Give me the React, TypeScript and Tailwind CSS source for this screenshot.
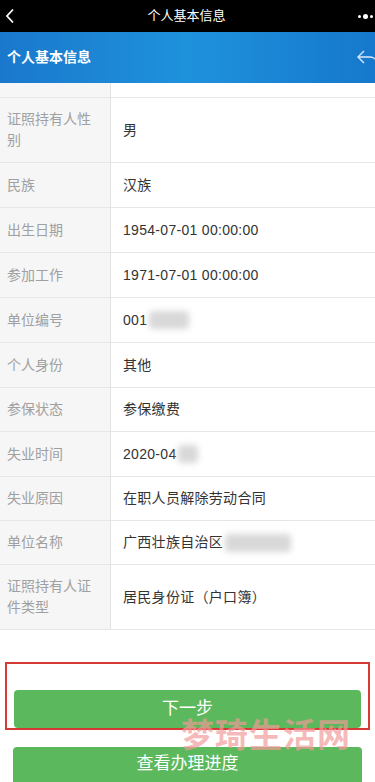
import React from 'react';

type Row = { label: string; value: React.ReactNode; h: string };

const Blur = ({ w }: { w: string }) => (
  <span className={`inline-block h-[18px] ${w} bg-[#d8d8d8] blur-[3px] rounded-sm align-middle ml-[2px]`} />
);

const rows: Row[] = [
  { label: '证照持有人性别', value: '男', h: 'h-[65px]' },
  { label: '民族', value: '汉族', h: 'h-[45px]' },
  { label: '出生日期', value: '1954-07-01 00:00:00', h: 'h-[45px]' },
  { label: '参加工作', value: '1971-07-01 00:00:00', h: 'h-[45px]' },
  { label: '单位编号', value: <>001<Blur w="w-[40px]" /></>, h: 'h-[45px]' },
  { label: '个人身份', value: '其他', h: 'h-[45px]' },
  { label: '参保状态', value: '参保缴费', h: 'h-[44px]' },
  { label: '失业时间', value: <>2020-04<Blur w="w-[20px]" /></>, h: 'h-[45px]' },
  { label: '失业原因', value: '在职人员解除劳动合同', h: 'h-[44px]' },
  { label: '单位名称', value: <>广西壮族自治区<Blur w="w-[66px]" /></>, h: 'h-[44px]' },
  { label: '证照持有人证件类型', value: '居民身份证（户口簿）', h: 'h-[65px]' },
];

export default function App() {
  return (
    <div
      className="w-[375px] h-[782px] bg-white overflow-hidden relative flex flex-col"
      style={{ fontFamily: '"Liberation Sans", "Noto Sans CJK SC", sans-serif' }}
    >
      {/* WeChat top bar */}
      <div className="h-[32px] bg-black flex items-center justify-between px-[5px] shrink-0">
        <svg width="10" height="16" viewBox="0 0 10 16" fill="none" stroke="white" strokeWidth="1.8">
          <path d="M8 1.5 L2 8 L8 14.5" />
        </svg>
        <span className="text-white text-[13px]">个人基本信息</span>
        <div className="flex items-center gap-[2px] mr-[-3px]">
          <span className="w-[3px] h-[3px] rounded-full bg-white" />
          <span className="w-[5px] h-[5px] rounded-full bg-white" />
          <span className="w-[3px] h-[3px] rounded-full bg-white" />
        </div>
      </div>

      {/* Blue header */}
      <div className="h-[51px] shrink-0 flex items-center justify-between pl-[7px] bg-gradient-to-r from-[#1a78cc] via-[#1f92dc] to-[#1678cc]">
        <span className="text-white text-[14px] font-bold">个人基本信息</span>
        <svg width="22" height="18" viewBox="0 0 22 18" fill="none" stroke="#dbeafe" strokeWidth="1.4" className="mr-[-3px]">
          <path d="M8 2 L2 8 L8 14" />
          <path d="M2 8 H14 C18 8 21 11 21 16" />
        </svg>
      </div>

      {/* Table */}
      <div className="flex flex-col shrink-0">
        <div className="flex h-[15px] border-b border-[#e6e6e6]">
          <div className="w-[111px] bg-[#f6f6f6] border-r border-[#e2e2e2]" />
          <div className="flex-1" />
        </div>
        {rows.map((r) => (
          <div key={r.label} className={`flex ${r.h} border-b border-[#e6e6e6]`}>
            <div className="w-[111px] shrink-0 bg-[#f6f6f6] border-r border-[#e2e2e2] flex items-center pl-[7px] pr-[12px] text-[14px] leading-[21px] text-[#a0a0a0]">
              {r.label}
            </div>
            <div className="flex-1 flex items-center pl-[12px] text-[14px] tracking-[0.3px] text-[#333]">
              {r.value}
            </div>
          </div>
        ))}
      </div>

      {/* Buttons */}
      <div className="relative mt-[32px] mx-[5px] h-[68px] border-2 border-[#d63a34] pt-[26px] px-[7px]">
        <button className="w-full h-[38px] rounded-[4px] bg-[#5cb85c] text-white text-[17px]">下一步</button>
      </div>
      <div className="px-[13px] mt-[17px]">
        <button className="w-full h-[42px] rounded-[4px] bg-[#5cb85c] text-white text-[17px] pb-[8px]">查看办理进度</button>
      </div>

      {/* watermark */}
      <span className="absolute left-[181px] top-[716px] text-[33px] leading-[40px] font-bold text-[#f29a9a]/70 tracking-[1px]">
        梦琦生活网
      </span>
    </div>
  );
}
